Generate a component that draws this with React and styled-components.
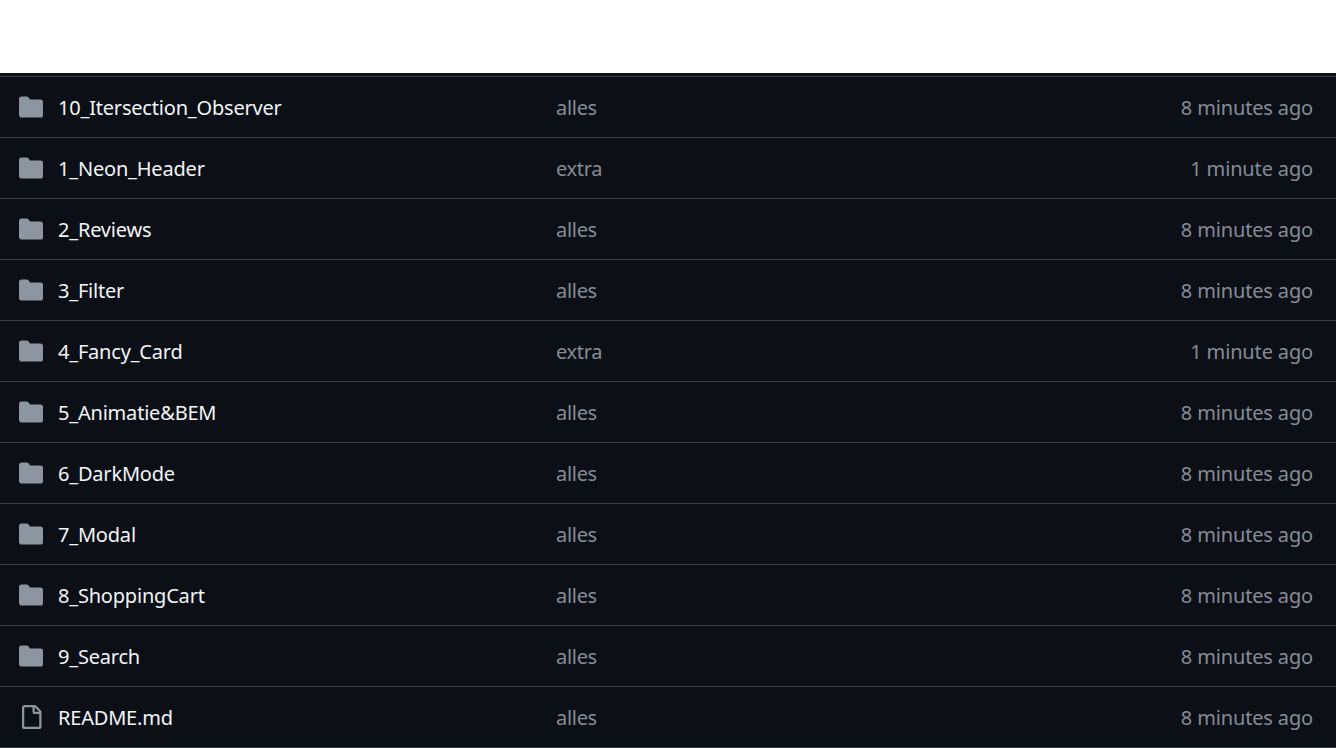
import React from "react";
import styled, { createGlobalStyle } from "styled-components";

const GlobalStyle = createGlobalStyle`
  html, body {
    margin: 0;
    padding: 0;
    background: #ffffff;
  }
`;

const Page = styled.div`
  height: 748px;
  overflow: hidden;
  font-family: "Noto Sans", "Open Sans", sans-serif;
`;

const TopStrip = styled.div`
  height: 73px;
  background: #ffffff;
`;

const FileTable = styled.ul`
  list-style: none;
  margin: 0;
  padding: 3px 0 1px;
  background: #0c0f16;
`;

const Row = styled.li`
  display: grid;
  grid-template-columns: 58px 498px 1fr auto;
  align-items: center;
  height: 60px;
  padding-right: 23px;
  border-top: 1px solid #3a3f46;

  &:last-child {
    border-bottom: 1px solid #3a3f46;
  }
`;

const IconCell = styled.div`
  display: flex;
  padding-left: 19px;
`;

const Name = styled.span`
  font-size: 20px;
  letter-spacing: -0.2px;
  color: #f2f5f8;
`;

const Message = styled.span`
  font-size: 20px;
  letter-spacing: -0.3px;
  color: #848d97;
`;

const Age = styled.span`
  font-size: 20px;
  letter-spacing: -0.15px;
  color: #848d97;
  text-align: right;
`;

const FolderIcon = () => (
  <svg width="24" height="24" viewBox="0 0 16 16" fill="#8d96a0">
    <path d="M1.75 1A1.75 1.75 0 0 0 0 2.75v10.5C0 14.216.784 15 1.75 15h12.5A1.75 1.75 0 0 0 16 13.25v-8.5A1.75 1.75 0 0 0 14.25 3H7.5a.25.25 0 0 1-.2-.1l-.9-1.2C6.07 1.26 5.55 1 5 1H1.75Z" />
  </svg>
);

const FileIcon = () => (
  <svg width="24" height="24" viewBox="0 0 16 16" fill="#8d96a0">
    <path d="M2 1.75C2 .784 2.784 0 3.75 0h6.586c.464 0 .909.184 1.237.513l2.914 2.914c.329.328.513.773.513 1.237v9.586A1.75 1.75 0 0 1 13.25 16h-9.5A1.75 1.75 0 0 1 2 14.25Zm1.75-.25a.25.25 0 0 0-.25.25v12.5c0 .138.112.25.25.25h9.5a.25.25 0 0 0 .25-.25V6h-2.75A1.75 1.75 0 0 1 9 4.25V1.5Zm6.75.062V4.25c0 .138.112.25.25.25h2.688l-.011-.013-2.914-2.914-.013-.011Z" />
  </svg>
);

const files = [
  { name: "10_Itersection_Observer", message: "alles", age: "8 minutes ago" },
  { name: "1_Neon_Header", message: "extra", age: "1 minute ago" },
  { name: "2_Reviews", message: "alles", age: "8 minutes ago" },
  { name: "3_Filter", message: "alles", age: "8 minutes ago" },
  { name: "4_Fancy_Card", message: "extra", age: "1 minute ago" },
  { name: "5_Animatie&BEM", message: "alles", age: "8 minutes ago" },
  { name: "6_DarkMode", message: "alles", age: "8 minutes ago" },
  { name: "7_Modal", message: "alles", age: "8 minutes ago" },
  { name: "8_ShoppingCart", message: "alles", age: "8 minutes ago" },
  { name: "9_Search", message: "alles", age: "8 minutes ago" },
  { name: "README.md", message: "alles", age: "8 minutes ago", isFile: true },
];

const App = () => (
  <Page>
    <GlobalStyle />
    <TopStrip />
    <FileTable>
      {files.map((item) => (
        <Row key={item.name}>
          <IconCell>{item.isFile ? <FileIcon /> : <FolderIcon />}</IconCell>
          <Name>{item.name}</Name>
          <Message>{item.message}</Message>
          <Age>{item.age}</Age>
        </Row>
      ))}
    </FileTable>
  </Page>
);

export default App;
